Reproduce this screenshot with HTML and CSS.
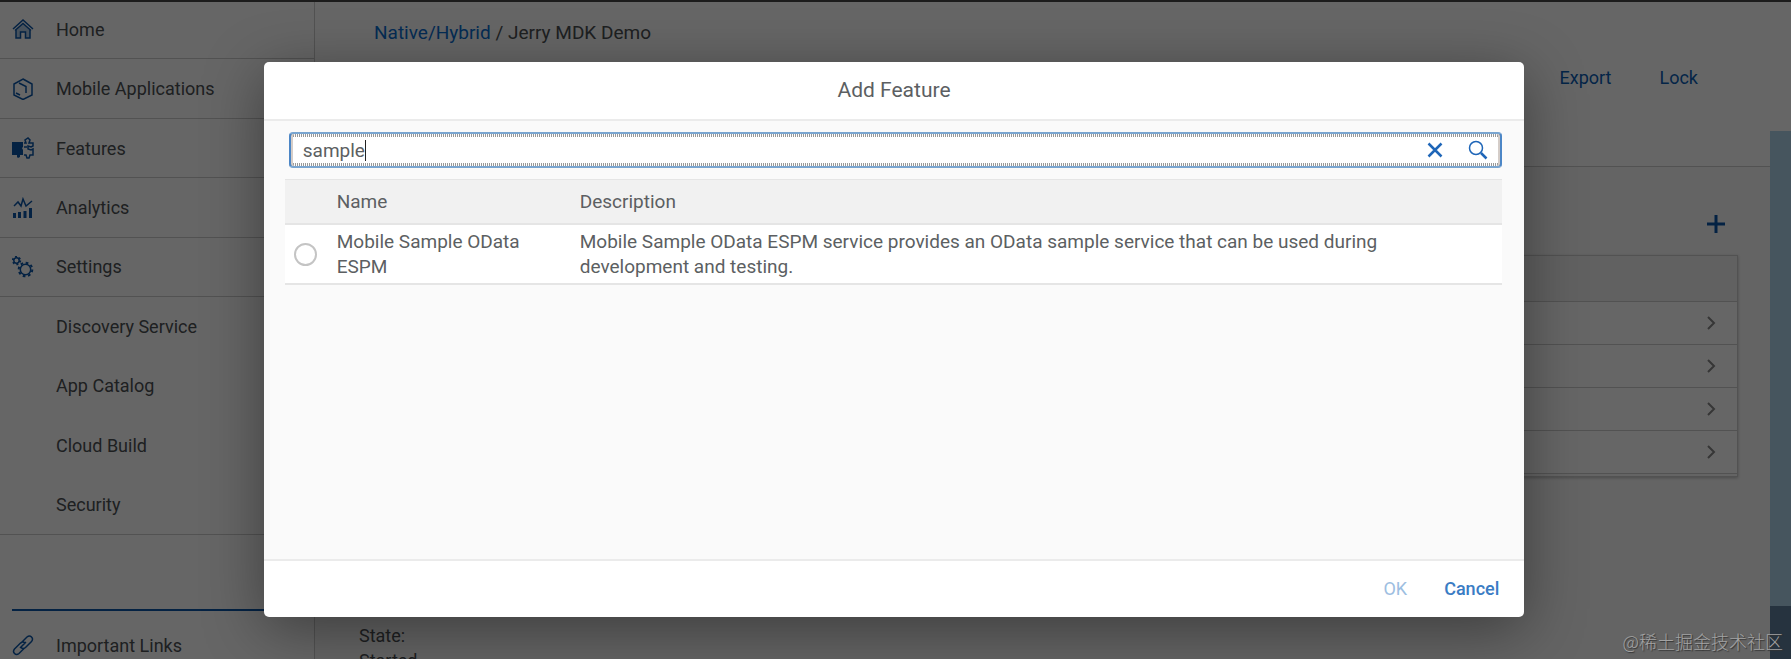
FILE: index.html
```html
<!DOCTYPE html>
<html lang="en">
<head>
<meta charset="utf-8">
<title>Jerry MDK Demo</title>
<link rel="stylesheet" href="styles.css">
</head>
<body>
<div class="app">
  <aside class="sidebar">
    <nav class="nav">
      <a class="nav-item" href="#">
        <svg class="icon" viewBox="0 0 22 22"><path class="tint" d="M4 12l7-6 7 6v8h-4.500v-6h-5v6H4z"/><path d="M1 11 11 2l10 9M3 12.500 11 5.500l8 7M4 12v8h4.500v-6h5v6H18v-8"/></svg>
        Home</a>
      <a class="nav-item" href="#">
        <svg class="icon" viewBox="0 0 22 22"><path d="M11 1 20 6v11l-9 4.500L2 17V6zM7 5l7 3.500V15M4 15l4 2"/></svg>
        Mobile Applications</a>
      <a class="nav-item" href="#">
        <svg class="icon" viewBox="0 0 22 22"><path class="solid" d="M0 5h11v5l-1 1 1 2v5H8v2l-2 1-1-1v-2H0z"/><path d="M12 6h2l-1-3 3-2 2 2-1 3h4v3l-2 1-3-1v3l3 1 2-1v6h-3l-1 3h-2l-1-3h-2M12 10h3"/></svg>
        Features</a>
      <a class="nav-item" href="#">
        <svg class="icon" viewBox="0 0 22 22"><path d="M2 9l4-4 3 4 2-7 3 7 6-5"/><path class="solid" d="M1 16h3v5H1zM6 15h3v6H6zM11.500 14h3v7h-3zM17 11h3v10h-3z"/></svg>
        Analytics</a>
      <a class="nav-item" href="#">
        <svg class="icon" viewBox="0 0 22 22"><circle cx="13.500" cy="13.500" r="5.200"/><circle class="teeth" cx="13.500" cy="13.500" r="6.800"/><circle cx="4.500" cy="4.500" r="2.700"/><circle class="teeth small" cx="4.500" cy="4.500" r="3.700"/></svg>
        Settings</a>
      <a class="nav-item sub" href="#">Discovery Service</a>
      <a class="nav-item sub" href="#">App Catalog</a>
      <a class="nav-item sub" href="#">Cloud Build</a>
      <a class="nav-item sub last" href="#">Security</a>
    </nav>
    <a class="nav-item links" href="#">
      <svg class="icon" viewBox="0 0 22 22"><path d="M9 9l6-6q2.500-2 4.500 0t0 4.500l-6 6q-2.500 2-4.500 0M13 9q-2-2-4.500 0l-6 6q-2 2.500 0 4.500t4.500 0l5-5M8 14l6-6"/></svg>
      Important Links</a>
  </aside>
  <main class="main">
    <header class="page-header">
      <div class="breadcrumb"><a href="#">Native/Hybrid</a> / Jerry MDK Demo</div>
      <div class="actions"><button>Export</button><button>Lock</button></div>
    </header>
    <div class="toolbar">
      <button class="add" aria-label="Add"><svg viewBox="0 0 20 20"><path d="M10 1v18M1 10h18"/></svg></button>
    </div>
    <ul class="assigned">
      <li class="head"></li>
      <li><svg viewBox="0 0 10 14"><path d="M2 1l6 6-6 6"/></svg></li>
      <li><svg viewBox="0 0 10 14"><path d="M2 1l6 6-6 6"/></svg></li>
      <li><svg viewBox="0 0 10 14"><path d="M2 1l6 6-6 6"/></svg></li>
      <li><svg viewBox="0 0 10 14"><path d="M2 1l6 6-6 6"/></svg></li>
    </ul>
    <div class="status"><div>State:</div><div>Started</div></div>
  </main>
  <div class="rail"><div class="rail-top"></div><div class="rail-mid"></div><div class="rail-end"></div></div>
</div>
<div class="overlay">
  <section class="dialog" role="dialog" aria-labelledby="title">
    <h1 class="dialog-title" id="title">Add Feature</h1>
    <div class="dialog-body">
      <form class="search">
        <input type="text" aria-label="Search" value="sample">
        <span class="caret"></span>
        <button type="button" aria-label="Clear"><svg viewBox="0 0 20 20"><path class="cross" d="M3.500 3.500l13 13M16.500 3.500l-13 13"/></svg></button>
        <button type="button" aria-label="Search"><svg viewBox="0 0 20 20"><circle cx="8" cy="8" r="6.500"/><path class="handle" d="M13 13l5.500 5.500"/></svg></button>
      </form>
      <table class="features">
        <thead><tr><th class="pick"></th><th class="name">Name</th><th>Description</th></tr></thead>
        <tbody><tr>
          <td class="pick"><input type="radio" id="espm" name="feature"></td>
          <td><label for="espm">Mobile Sample OData ESPM</label></td>
          <td class="desc">Mobile Sample OData ESPM service provides an OData sample service that can be used during development and testing.</td>
        </tr></tbody>
      </table>
    </div>
    <footer class="dialog-footer"><button disabled>OK</button><button>Cancel</button></footer>
  </section>
</div>
<div class="watermark">@稀土掘金技术社区</div>
</body>
</html>
```
FILE: styles.css
```css
* { box-sizing: border-box; }
body {
  margin: 0;
  height: 100vh;
  overflow: hidden;
  position: relative;
  font: 18px/25px Roboto, "Noto Sans", sans-serif;
  color: #4c5054;
  background: #fff;
}
button {
  border: 0;
  padding: 0;
  background: none;
  font: inherit;
  color: #0a5cb5;
}
svg { display: block; fill: none; stroke: #0a55a8; stroke-width: 2; }

.app { display: flex; height: 100%; }
.sidebar {
  flex: none;
  width: 315px;
  border-right: 1px solid #ccc;
  overflow: hidden;
}
.nav { display: flex; flex-direction: column; height: 535px; }
.nav-item {
  flex: 1;
  display: flex;
  align-items: center;
  gap: 22px;
  padding-left: 12px;
  border-bottom: 1px solid #ccc;
  color: inherit;
  text-decoration: none;
}
.nav-item.sub { padding-left: 56px; border-bottom-color: transparent; }
.nav-item.last { border-bottom-color: #ccc; }
.nav-item.links {
  margin: 74px 0 0 12px;
  padding: 0;
  height: 70px;
  border: 0;
  border-top: 2px solid #0a55a8;
}
.icon { width: 22px; height: 22px; stroke-width: 1.5; }
.icon .solid { fill: #0a55a8; stroke: none; }
.icon .tint { fill: #b5cde5; stroke: none; }
.icon .teeth { stroke-width: 2; stroke-dasharray: 2.700 2.640; }
.icon .small { stroke-dasharray: 1.900 2; }

.main { flex: 1; background: #fafafa; }
.page-header {
  display: flex;
  justify-content: space-between;
  height: 167px;
  padding: 20px 72px 0 59px;
  background: #fff;
  border-bottom: 1px solid #ccc;
}
.breadcrumb { font-size: 19px; }
.breadcrumb a { color: #0a6ed1; text-decoration: none; }
.actions { display: flex; gap: 48px; align-self: flex-start; padding-top: 45px; }
.toolbar { display: flex; justify-content: flex-end; padding: 47px 44px 21px 0; }
.add svg { width: 20px; height: 20px; stroke-width: 3; }
.assigned {
  margin: 0 32px 0 44px;
  padding: 0 0 2px;
  list-style: none;
  border: 1px solid #ccc;
  box-shadow: 0 1px 3px #bbb;
}
.assigned li {
  display: flex;
  align-items: center;
  justify-content: flex-end;
  height: 43px;
  padding-right: 21px;
  border-bottom: 1px solid #ccc;
  background: #fff;
}
.assigned .head { height: 46px; background: #f2f2f2; }
.assigned svg { width: 10px; height: 14px; stroke: #888; }
.status { padding: 146px 0 0 44px; }

.rail { flex: none; width: 21px; display: flex; flex-direction: column; }
.rail-top { height: 131px; }
.rail-mid { flex: 1; background: #afd4eb; }
.rail-end { height: 53px; background: #5f809e; }

.overlay {
  position: absolute;
  inset: 0;
  padding: 60px 3px 0 0;
  border-top: 2px solid #1c1c1c;
  background: rgba(0, 0, 0, 0.6);
}
.dialog {
  display: flex;
  flex-direction: column;
  width: 70.5%;
  margin: 0 auto;
  border-radius: 5px;
  overflow: hidden;
  background: #fff;
  color: #5c5f62;
  font-size: 19px;
  box-shadow: 0 12px 60px rgba(0, 0, 0, 0.4);
}
.dialog-title {
  margin: 0;
  padding: 16px;
  border-bottom: 2px solid #ebebeb;
  font-size: 21px;
  line-height: 25px;
  font-weight: 400;
  text-align: center;
}
.dialog-body {
  display: flex;
  flex-direction: column;
  gap: 11px;
  min-height: 438px;
  padding: 11px 22px 0 21px;
  background: #fafafa;
}
.search {
  display: flex;
  align-items: center;
  height: 36px;
  margin-left: 4px;
  padding: 0 12px;
  border: 2px solid #79a5d0;
  border-left-color: #4c86c6;
  border-right-color: #4c86c6;
  border-radius: 4px;
  background:
    repeating-linear-gradient(90deg, #999 0 1px, #fff 1px 2px) top / 100% 3px no-repeat,
    repeating-linear-gradient(90deg, #999 0 1px, #fff 1px 2px) bottom / 100% 3px no-repeat,
    #fff;
  box-shadow: inset 2px 0 #d5cdc8, inset -2px 0 #d5cdc8;
}
.search input {
  field-sizing: content;
  height: 24px;
  padding: 0;
  border: 0;
  outline: 0;
  background: none;
  font: inherit;
  color: inherit;
}
.caret { width: 1px; height: 21px; margin-right: auto; background: #222; }
.search button + button { margin-left: 23px; }
.search svg { width: 20px; height: 20px; stroke: #1f66b8; }
.search .cross { stroke-width: 2.500; }
.search circle { stroke-width: 1.500; }
.search .handle { stroke-width: 2.500; }

.features { width: 100%; border-collapse: collapse; background: #fff; }
.features th, .features td {
  padding: 4px 0;
  font-weight: 400;
  text-align: left;
  vertical-align: top;
  border-bottom: 2px solid #e5e5e5;
}
.features th { padding: 9px 0; background: #f1f1f1; border-top: 1px solid #e5e5e5; }
.features .pick { width: 52px; vertical-align: middle; }
.features .name { width: 243px; }
.features label { display: block; padding-right: 40px; }
.features .desc { padding-right: 100px; }
.features input {
  display: block;
  appearance: none;
  width: 23px;
  height: 23px;
  margin: 0 0 0 9px;
  border: 2px solid #c4c4c4;
  border-radius: 50%;
  background: #fff;
}
.dialog-footer {
  display: flex;
  justify-content: flex-end;
  gap: 37px;
  padding: 15px 25px 16px;
  border-top: 2px solid #ebebeb;
  font-size: 18px;
}
.dialog-footer button { color: #3a7cc4; }
.dialog-footer button:last-child { font-weight: 500; }
.dialog-footer button:disabled { color: #9dbee1; }

.watermark {
  position: absolute;
  right: 8px;
  bottom: 5px;
  font: 300 18px/26px "Noto Sans CJK SC", sans-serif;
  color: #a3a3a3;
  text-shadow: 1px 1px 1px #333;
}
```
